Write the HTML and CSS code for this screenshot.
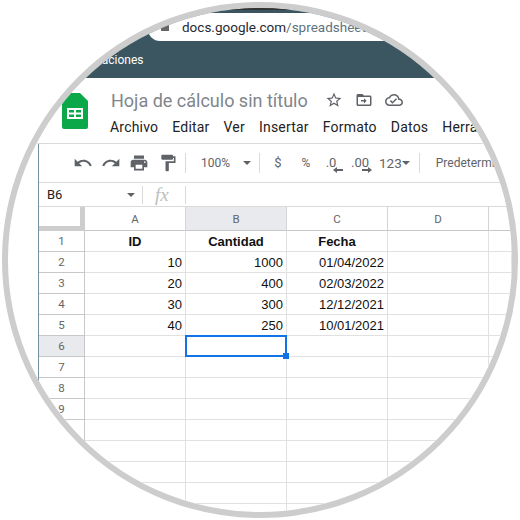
FILE: index.html
```html
<!DOCTYPE html>
<html lang="es">
<head>
  <meta charset="UTF-8">
  <title>Hoja de cálculo sin título</title>
  <link rel="stylesheet" href="styles.css">
</head>
<body>
  <div class="lens">
    <section class="chrome">
      <div class="address">
        <span class="lock"></span>
        <span class="url">docs.google.com<span class="url-path">/spreadsheets/d/1</span></span>
      </div>
      <div class="bookmarks">Aplicaciones</div>
    </section>

    <header class="doc-header">
      <svg class="logo" width="26" height="36" viewBox="0 0 26 36">
        <path fill="#0ba84a" d="M2 0H18L26 8V34Q26 36 24 36H2Q0 36 0 34V2Q0 0 2 0Z"/>
        <path fill="#fff" d="M5 15H21V26H5Z"/>
        <path fill="#0ba84a" d="M7 17H12V19.500H7ZM14 17H19V19.500H14ZM7 21.500H12V24H7ZM14 21.500H19V24H14Z"/>
      </svg>
      <div class="doc-info">
        <div class="title-row">
          <span class="doc-title">Hoja de cálculo sin título</span>
          <svg class="title-icon" width="18" height="18" viewBox="0 0 24 24"><path d="M22 9.240l-7.190-.620L12 2 9.190 8.630 2 9.240l5.460 4.730L5.820 21 12 17.270 18.180 21l-1.630-7.030L22 9.240zM12 15.400l-3.760 2.270 1-4.280-3.320-2.880 4.380-.380L12 6.100l1.710 4.040 4.380.380-3.320 2.880 1 4.280L12 15.400z"/></svg>
          <svg class="title-icon" width="18" height="18" viewBox="0 0 24 24"><path d="M20 6h-8l-2-2H4c-1.100 0-2 .9-2 2v12c0 1.100.9 2 2 2h16c1.100 0 2-.9 2-2V8c0-1.100-.9-2-2-2zm0 12H4V8h16v10z"/><path d="M12 9.500V12H8v2h4v2.500l3.500-3.500z"/></svg>
          <svg class="title-icon" width="18" height="18" viewBox="0 0 24 24"><path d="M19.350 10.040C18.670 6.590 15.640 4 12 4 9.110 4 6.600 5.640 5.350 8.040 2.340 8.360 0 10.910 0 14c0 3.310 2.690 6 6 6h13c2.760 0 5-2.240 5-5 0-2.640-2.050-4.780-4.650-4.960zM19 18H6c-2.210 0-4-1.790-4-4 0-2.050 1.530-3.760 3.560-3.970l1.070-.110.5-.95C8.080 7.140 9.940 6 12 6c2.620 0 4.880 1.860 5.390 4.430l.3 1.500 1.530.110c1.560.1 2.780 1.410 2.780 2.960 0 1.650-1.350 3-3 3zm-9-3.820l-2.090-2.090L6.500 13.500 10 17l6.010-6.010-1.410-1.410z"/></svg>
        </div>
        <nav class="menu">
          <a href="#">Archivo</a>
          <a href="#">Editar</a>
          <a href="#">Ver</a>
          <a href="#">Insertar</a>
          <a href="#">Formato</a>
          <a href="#">Datos</a>
          <a href="#">Herramientas</a>
        </nav>
      </div>
    </header>

    <main class="workspace">
      <div class="toolbar">
        <span class="tool"><svg width="20" height="20" viewBox="0 0 24 24"><path d="M12.500 8c-2.650 0-5.050.99-6.900 2.600L2 7v9h9l-3.620-3.620c1.390-1.160 3.160-1.880 5.120-1.880 3.540 0 6.550 2.310 7.600 5.500l2.370-.78C21.080 11.030 17.150 8 12.500 8z"/></svg></span>
        <span class="tool"><svg width="20" height="20" viewBox="0 0 24 24"><path d="M18.400 10.600C16.550 8.990 14.150 8 11.500 8c-4.650 0-8.580 3.030-9.960 7.220L3.900 16c1.050-3.190 4.050-5.500 7.600-5.500 1.950 0 3.730.72 5.120 1.880L13 16h9V7l-3.600 3.600z"/></svg></span>
        <span class="tool"><svg width="20" height="20" viewBox="0 0 24 24"><path d="M19 8H5c-1.660 0-3 1.340-3 3v6h4v4h12v-4h4v-6c0-1.660-1.340-3-3-3zm-3 11H8v-5h8v5zm3-7c-.55 0-1-.45-1-1s.45-1 1-1 1 .45 1 1-.45 1-1 1zm-1-9H6v4h12V3z"/></svg></span>
        <span class="tool tool-paint"><svg width="20" height="20" viewBox="0 0 24 24"><path d="M18 4V3c0-.55-.45-1-1-1H5c-.55 0-1 .45-1 1v4c0 .55.45 1 1 1h12c.55 0 1-.45 1-1V6h1v4H9v11c0 .55.45 1 1 1h2c.55 0 1-.45 1-1v-9h8V4h-3z"/></svg></span>
        <span class="divider divider-first"></span>
        <span class="zoom-value">100%</span>
        <span class="caret caret-zoom"></span>
        <span class="divider divider-second"></span>
        <span class="tool tool-dollar">$</span>
        <span class="tool tool-percent">%</span>
        <span class="tool tool-decimal tool-less">.0
          <svg class="dec-arrow" width="10" height="6" viewBox="0 0 10 6"><path d="M0 3L4 0V2H10V4H4V6Z"/></svg>
        </span>
        <span class="tool tool-decimal tool-more">.00
          <svg class="dec-arrow" width="10" height="6" viewBox="0 0 10 6"><path d="M10 3L6 0V2H0V4H6V6Z"/></svg>
        </span>
        <span class="format-more">123</span>
        <span class="caret caret-format"></span>
        <span class="divider divider-third"></span>
        <span class="font-name">Predeterminado</span>
      </div>

      <div class="formula-bar">
        <span class="cell-name">B6</span>
        <span class="caret caret-name"></span>
        <span class="divider divider-fx"></span>
        <span class="fx">fx</span>
        <span class="divider divider-input"></span>
      </div>

      <div class="sheet">
        <div class="corner"></div><div class="col-head">A</div><div class="col-head active">B</div><div class="col-head">C</div><div class="col-head">D</div><div class="col-head"></div>

        <div class="row-head">1</div><div class="cell head">ID</div><div class="cell head">Cantidad</div><div class="cell head">Fecha</div><div class="cell"></div><div class="cell"></div>
        <div class="row-head">2</div><div class="cell num">10</div><div class="cell num">1000</div><div class="cell num">01/04/2022</div><div class="cell"></div><div class="cell"></div>
        <div class="row-head">3</div><div class="cell num">20</div><div class="cell num">400</div><div class="cell num">02/03/2022</div><div class="cell"></div><div class="cell"></div>
        <div class="row-head">4</div><div class="cell num">30</div><div class="cell num">300</div><div class="cell num">12/12/2021</div><div class="cell"></div><div class="cell"></div>
        <div class="row-head">5</div><div class="cell num">40</div><div class="cell num">250</div><div class="cell num">10/01/2021</div><div class="cell"></div><div class="cell"></div>
        <div class="row-head active">6</div><div class="cell"></div><div class="cell selected"><span class="handle"></span></div><div class="cell"></div><div class="cell"></div><div class="cell"></div>
        <div class="row-head">7</div><div class="cell"></div><div class="cell"></div><div class="cell"></div><div class="cell"></div><div class="cell"></div>
        <div class="row-head">8</div><div class="cell"></div><div class="cell"></div><div class="cell"></div><div class="cell"></div><div class="cell"></div>
        <div class="row-head">9</div><div class="cell"></div><div class="cell"></div><div class="cell"></div><div class="cell"></div><div class="cell"></div>
        <div class="row-head"></div><div class="cell"></div><div class="cell"></div><div class="cell"></div><div class="cell"></div><div class="cell"></div>
        <div class="row-head"></div><div class="cell"></div><div class="cell"></div><div class="cell"></div><div class="cell"></div><div class="cell"></div>
        <div class="row-head"></div><div class="cell"></div><div class="cell"></div><div class="cell"></div><div class="cell"></div><div class="cell"></div>
        <div class="row-head"></div><div class="cell"></div><div class="cell"></div><div class="cell"></div><div class="cell"></div><div class="cell"></div>
        <div class="row-head"></div><div class="cell"></div><div class="cell"></div><div class="cell"></div><div class="cell"></div><div class="cell"></div>
      </div>
    </main>
  </div>
</body>
</html>
```

FILE: styles.css
```css
html, body {
  margin: 0;
  height: 100%;
  background: #fff;
}

body {
  font-family: 'Roboto', sans-serif;
  color: #222;
}

.lens {
  box-sizing: border-box;
  width: 516px;
  height: 516px;
  margin: 2px;
  border: 6px solid #cdcdcd;
  border-radius: 50%;
  overflow: hidden;
  background: #fff;
}

/* browser strip */
.chrome {
  box-sizing: border-box;
  height: 70px;
  padding-top: 3px;
  background: #3b5660;
  border-top: 2px solid #333;
}

.address {
  display: flex;
  align-items: center;
  height: 28px;
  margin-left: 140px;
  padding-left: 13px;
  background: #fff;
  border-bottom-left-radius: 12px;
}

.lock {
  width: 8px;
  height: 8px;
  margin-right: 13px;
  background: #666;
}

.url {
  font-size: 13.500px;
  white-space: nowrap;
  color: #1f2a33;
}

.url-path {
  color: #5f7380;
}

.bookmarks {
  margin: 12px 0 0 67px;
  font-size: 12px;
  color: #fff;
}

/* doc title and menu */
.doc-header {
  box-sizing: border-box;
  display: flex;
  height: 66px;
  padding: 15px 0 0 54px;
  border-bottom: 1px solid #dadada;
}

.logo {
  flex: none;
}

.doc-info {
  margin-left: 22px;
}

.title-row {
  display: flex;
  align-items: center;
  height: 18px;
  margin-top: -2px;
}

.doc-title {
  margin: 0 17px 0 1px;
  font-size: 18px;
  color: #80868b;
  white-space: nowrap;
}

.title-icon {
  flex: none;
  margin-right: 12px;
  fill: #5f6368;
}

.menu {
  display: flex;
  gap: 14px;
  margin-top: 10px;
  font-size: 14px;
  letter-spacing: .2px;
  line-height: 16px;
  white-space: nowrap;
}

.menu a {
  color: #222;
  text-decoration: none;
}

/* everything under the header */
.workspace {
  margin-left: 30px;
  border-left: 1px solid #7393a3;
}

.toolbar {
  box-sizing: border-box;
  display: flex;
  align-items: center;
  height: 39px;
  padding: 0 0 1px 30px;
  border-bottom: 1px solid #dadada;
  font-size: 12px;
  color: #5f6368;
  white-space: nowrap;
}

.tool {
  display: flex;
  justify-content: center;
  align-items: center;
  flex: none;
  width: 28px;
}

.tool svg {
  fill: #5f6368;
}

.tool-paint {
  width: 30px;
}

.divider {
  flex: none;
  width: 1px;
  height: 20px;
  background: #dadada;
}

.divider-first {
  margin-left: 2px;
}

.zoom-value {
  margin-left: 15px;
  width: 29px;
}

.caret {
  flex: none;
  width: 0;
  height: 0;
  border-left: 4px solid transparent;
  border-right: 4px solid transparent;
  border-top: 4px solid #5f6368;
}

.caret-zoom {
  margin-left: 13px;
}

.divider-second {
  margin-left: 8px;
}

.tool-dollar {
  width: 36px;
  font-size: 13px;
}

.tool-percent {
  width: 20px;
  font-size: 12px;
}

.tool-decimal {
  position: relative;
  font-size: 13px;
}

.tool-less {
  width: 30px;
}

.tool-more {
  width: 28px;
}

.dec-arrow {
  position: absolute;
  left: 50%;
  top: 12px;
  margin-left: 2px;
}

.format-more {
  margin-left: 5px;
  width: 23px;
  font-size: 13.500px;
}

.divider-third {
  margin-left: 9px;
}

.font-name {
  margin-left: 16px;
}

.formula-bar {
  box-sizing: border-box;
  display: flex;
  align-items: center;
  height: 24px;
  padding-left: 8px;
  border-bottom: 1px solid #dadada;
  background: #fff;
}

.cell-name {
  width: 80px;
  font-size: 13px;
}

.caret-name {
  border-left-width: 4.500px;
  border-right-width: 4.500px;
  border-top-width: 4.500px;
}

.divider-fx {
  margin-left: 7px;
  height: 18px;
}

.fx {
  width: 42px;
  padding-left: 12px;
  box-sizing: border-box;
  font-family: 'Liberation Serif', serif;
  font-style: italic;
  font-size: 19px;
  color: #bdbdbd;
}

.divider-input {
  height: 18px;
}

/* grid */
.sheet {
  display: grid;
  grid-template-columns: 46px repeat(4, 101px) 1fr;
  grid-template-rows: 24px;
  grid-auto-rows: 21px;
}

.corner,
.col-head,
.row-head,
.cell {
  box-sizing: border-box;
  border-right: 1px solid #e1e1e1;
  border-bottom: 1px solid #e1e1e1;
}

.corner {
  border-right: 5px solid #cdcdcd;
  border-bottom: 5px solid #cdcdcd;
}

.col-head,
.row-head {
  display: flex;
  justify-content: center;
  align-items: center;
  font-size: 11.500px;
  color: #666;
}

.col-head {
  border-right-color: #d4d4d4;
  border-bottom-color: #c8c8c8;
}

.row-head {
  border-right-color: #c8c8c8;
  border-bottom-color: #c8c8c8;
}

.active {
  background: #e8eaed;
}

.cell {
  position: relative;
  padding: 0 3px;
  font-family: 'Liberation Sans', sans-serif;
  font-size: 13px;
  line-height: 21px;
  color: #111;
  white-space: nowrap;
}

.head {
  text-align: center;
  font-weight: bold;
}

.num {
  text-align: right;
}

.selected::after {
  content: '';
  position: absolute;
  left: -1px;
  top: -1px;
  right: -1px;
  bottom: -1px;
  border: 2px solid #1173e6;
}

.handle {
  position: absolute;
  right: -3px;
  bottom: -3px;
  z-index: 1;
  width: 6px;
  height: 6px;
  background: #1173e6;
}
```
